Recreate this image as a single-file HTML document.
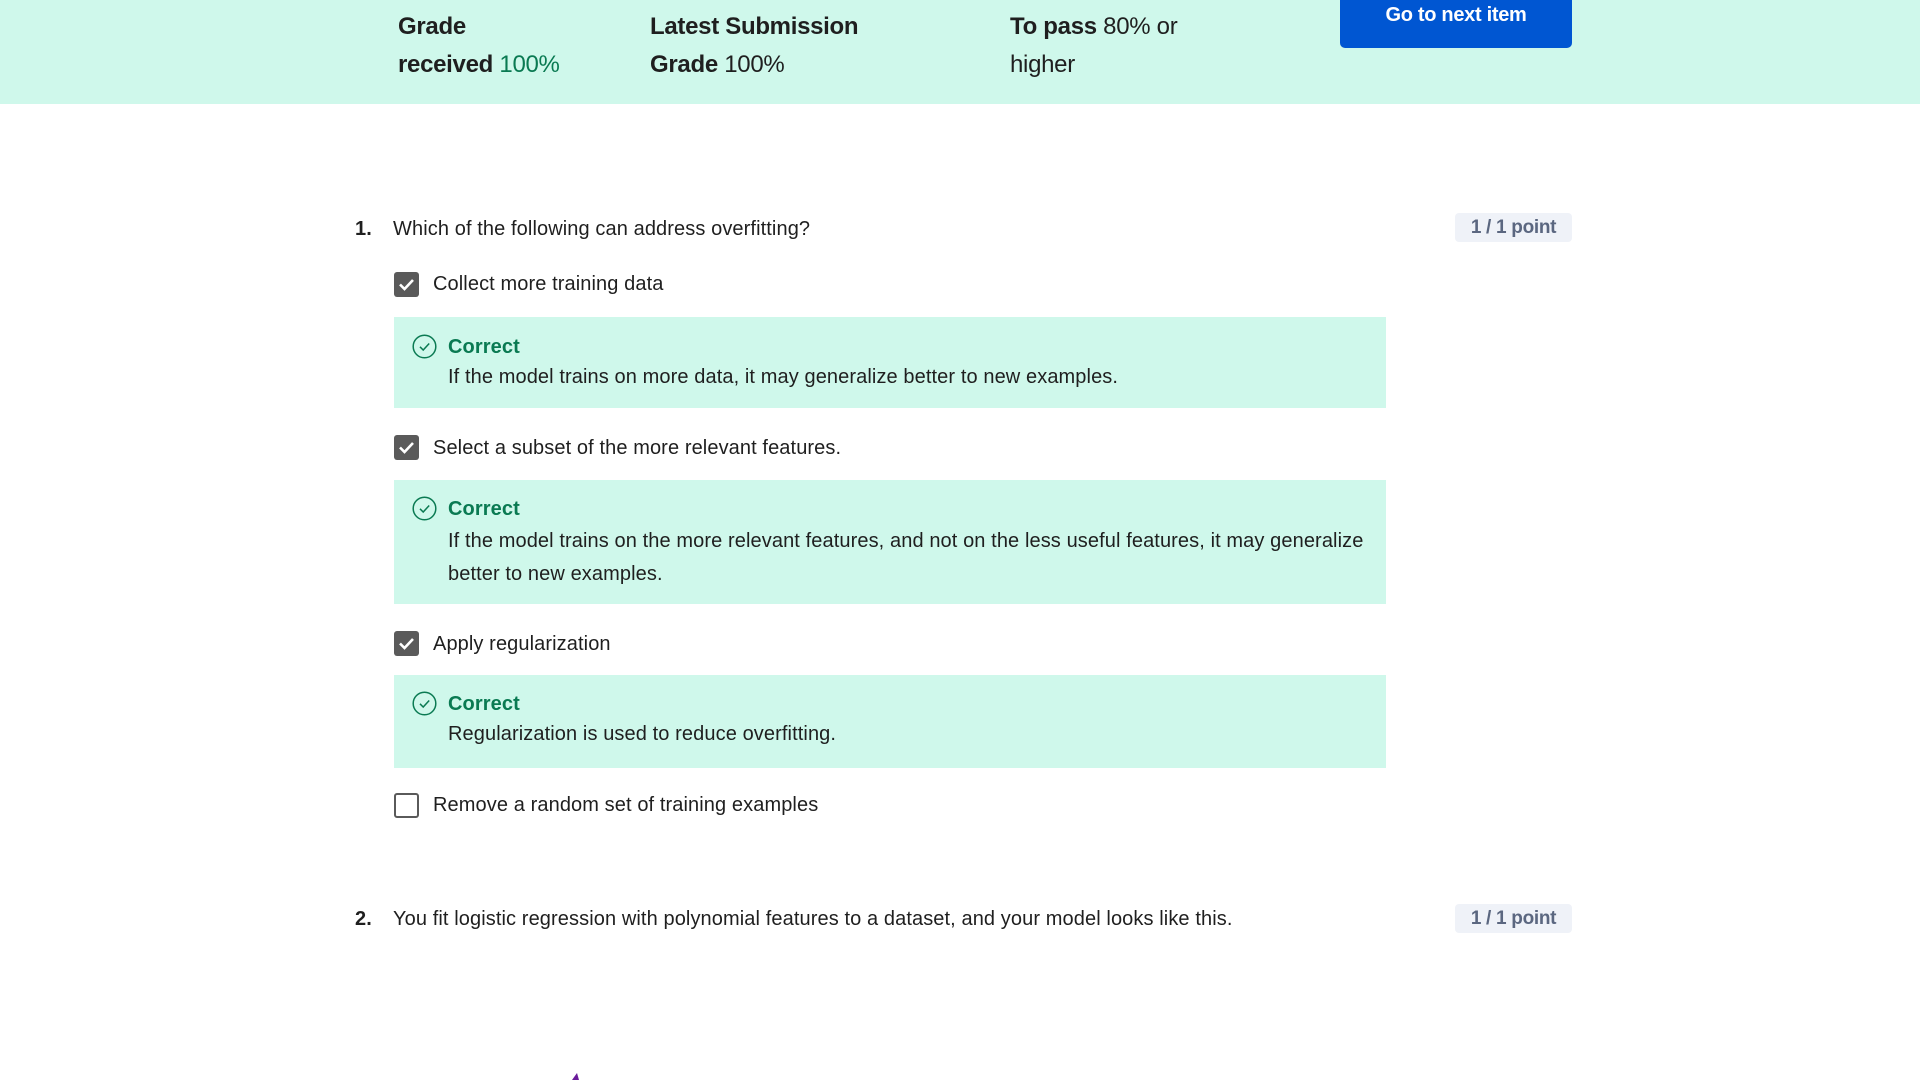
<!DOCTYPE html>
<html><head><meta charset="utf-8"><style>
*{margin:0;padding:0;box-sizing:border-box}
body{width:1920px;height:1080px;overflow:hidden;background:#fff;font-family:"Liberation Sans",sans-serif;color:#1f1f1f;position:relative}
.a{position:absolute;white-space:nowrap}
.hdr{position:absolute;left:0;top:0;width:1920px;height:104px;background:#cff8eb}
.h{font-size:24px;line-height:38px;letter-spacing:-0.3px}
.h b{font-weight:bold}
.g{color:#0a7a52}
.btn{position:absolute;left:1340px;top:0;width:232px;height:48px;background:#0056d2;border-radius:0 0 5px 5px;color:#fff;font-weight:bold;font-size:20px;text-align:center;line-height:30px;letter-spacing:-0.3px}
.t{font-size:20px;letter-spacing:0.1px;line-height:24px}
.badge{position:absolute;left:1455px;width:117px;height:29px;background:#eff2f8;border-radius:4px;color:#5b6780;font-weight:bold;font-size:19px;text-align:center;line-height:29px;letter-spacing:-0.3px}
.cb{position:absolute;left:394px;width:25px;height:25px;border-radius:3px;background:#5a5a5a}
.cb.e{background:#fff;border:2.5px solid #5a5a5a}
.fb{position:absolute;left:394px;width:992px;background:#cff8eb}
.ic{position:absolute;left:412px;width:25px;height:25px}
.cor{color:#0a7a52;font-weight:bold}
</style></head><body>
<div class="hdr"></div>
<div class="a h" style="left:398px;top:8px"><b>Grade</b><br><b>received</b> <span class="g">100%</span></div>
<div class="a h" style="left:650px;top:8px"><b>Latest Submission</b><br><b>Grade</b> 100%</div>
<div class="a h" style="left:1010px;top:8px"><b>To pass</b> 80% or<br>higher</div>
<div class="btn">Go to next item</div>

<div class="a t" style="left:355px;top:217px;font-weight:bold">1.</div>
<div class="a t" style="left:393px;top:217px">Which of the following can address overfitting?</div>
<div class="badge" style="top:213px">1 / 1 point</div>

<div class="cb" style="top:272px"><svg width="25" height="25" viewBox="0 0 25 25"><path d="M6 12.5l4.5 4.5L19 8" fill="none" stroke="#fff" stroke-width="2.6"/></svg></div>
<div class="a t" style="left:433px;top:272px">Collect more training data</div>
<div class="fb" style="top:317px;height:91px"></div>
<svg class="ic" style="top:334px" viewBox="0 0 25 25"><circle cx="12.5" cy="12.5" r="11.3" fill="none" stroke="#0a7a52" stroke-width="1.5"/><path d="M8 12.8l3.2 3.2 6-6.5" fill="none" stroke="#0a7a52" stroke-width="1.5"/></svg>
<div class="a t cor" style="left:448px;top:335px">Correct</div>
<div class="a t" style="left:448px;top:365px">If the model trains on more data, it may generalize better to new examples.</div>

<div class="cb" style="top:435px"><svg width="25" height="25" viewBox="0 0 25 25"><path d="M6 12.5l4.5 4.5L19 8" fill="none" stroke="#fff" stroke-width="2.6"/></svg></div>
<div class="a t" style="left:433px;top:436px">Select a subset of the more relevant features.</div>
<div class="fb" style="top:480px;height:124px"></div>
<svg class="ic" style="top:496px" viewBox="0 0 25 25"><circle cx="12.5" cy="12.5" r="11.3" fill="none" stroke="#0a7a52" stroke-width="1.5"/><path d="M8 12.8l3.2 3.2 6-6.5" fill="none" stroke="#0a7a52" stroke-width="1.5"/></svg>
<div class="a t cor" style="left:448px;top:497px">Correct</div>
<div class="a t" style="left:448px;top:525px;line-height:33px">If the model trains on the more relevant features, and not on the less useful features, it may generalize<br>better to new examples.</div>

<div class="cb" style="top:631px"><svg width="25" height="25" viewBox="0 0 25 25"><path d="M6 12.5l4.5 4.5L19 8" fill="none" stroke="#fff" stroke-width="2.6"/></svg></div>
<div class="a t" style="left:433px;top:632px">Apply regularization</div>
<div class="fb" style="top:675px;height:93px"></div>
<svg class="ic" style="top:691px" viewBox="0 0 25 25"><circle cx="12.5" cy="12.5" r="11.3" fill="none" stroke="#0a7a52" stroke-width="1.5"/><path d="M8 12.8l3.2 3.2 6-6.5" fill="none" stroke="#0a7a52" stroke-width="1.5"/></svg>
<div class="a t cor" style="left:448px;top:692px">Correct</div>
<div class="a t" style="left:448px;top:722px">Regularization is used to reduce overfitting.</div>

<div class="cb e" style="top:793px"></div>
<div class="a t" style="left:433px;top:793px">Remove a random set of training examples</div>

<div class="a t" style="left:355px;top:907px;font-weight:bold">2.</div>
<div class="a t" style="left:393px;top:907px">You fit logistic regression with polynomial features to a dataset, and your model looks like this.</div>
<div class="badge" style="top:904px">1 / 1 point</div>
<svg class="a" style="left:570px;top:1072px" width="14" height="8"><path d="M2 8L7 1L9 8" fill="#6a1b9a"/></svg>
</body></html>
